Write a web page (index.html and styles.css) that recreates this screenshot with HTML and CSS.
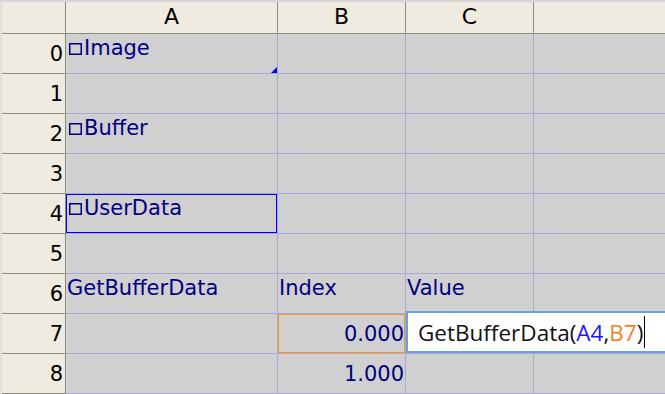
FILE: index.html
```html
<!DOCTYPE html>
<html lang="en">
<head>
    <meta charset="UTF-8">
    <title>Sheet</title>
    <link rel="stylesheet" href="styles.css">
</head>
<body>
    <div class="sheet">
        <div class="hd corner"></div>
        <div class="hd col">A</div>
        <div class="hd col">B</div>
        <div class="hd col">C</div>
        <div class="hd col"></div>

        <div class="hd row">0</div>
        <div class="cell"><svg class="box" width="13" height="12"><rect x="0.75" y="0.75" width="11.5" height="10.5"/></svg>Image<span class="flag"></span></div>
        <div class="cell"></div>
        <div class="cell"></div>
        <div class="cell"></div>

        <div class="hd row">1</div>
        <div class="cell"></div>
        <div class="cell"></div>
        <div class="cell"></div>
        <div class="cell"></div>

        <div class="hd row">2</div>
        <div class="cell"><svg class="box" width="13" height="12"><rect x="0.75" y="0.75" width="11.5" height="10.5"/></svg>Buffer</div>
        <div class="cell"></div>
        <div class="cell"></div>
        <div class="cell"></div>

        <div class="hd row">3</div>
        <div class="cell"></div>
        <div class="cell"></div>
        <div class="cell"></div>
        <div class="cell"></div>

        <div class="hd row">4</div>
        <div class="cell sel"><svg class="box" width="13" height="12"><rect x="0.75" y="0.75" width="11.5" height="10.5"/></svg>UserData</div>
        <div class="cell"></div>
        <div class="cell"></div>
        <div class="cell"></div>

        <div class="hd row">5</div>
        <div class="cell"></div>
        <div class="cell"></div>
        <div class="cell"></div>
        <div class="cell"></div>

        <div class="hd row">6</div>
        <div class="cell">GetBufferData</div>
        <div class="cell">Index</div>
        <div class="cell">Value</div>
        <div class="cell"></div>

        <div class="hd row">7</div>
        <div class="cell"></div>
        <div class="cell num ref">0.000</div>
        <div class="cell">
            <div class="editor">GetBufferData(<span class="r1">A4</span>,<span class="r2">B7</span>)<span class="caret"></span></div>
        </div>
        <div class="cell"></div>

        <div class="hd row">8</div>
        <div class="cell"></div>
        <div class="cell num">1.000</div>
        <div class="cell"></div>
        <div class="cell"></div>
    </div>
</body>
</html>
```

FILE: styles.css
```css
body {
    margin: 0;
    background: #d6d6d6;
    overflow: hidden;
    font-family: "DejaVu Sans", sans-serif;
}
.sheet {
    display: grid;
    grid-template-columns: 64px 212px 128px 128px 180px;
    grid-template-rows: 32px repeat(9, 40px);
    width: max-content;
    margin-top: 2px;
    padding-left: 2px;
    background: #dde1d8;
}

/* headers */
.hd {
    background: #efebe1;
    border-right: 1px solid #8d8c7c;
    border-bottom: 1px solid #8d8c7c;
    color: #000;
}
.col {
    font-size: 22px;
    line-height: 29px;
    text-align: center;
}
.row {
    font-size: 21px;
    display: flex;
    align-items: center;
    justify-content: flex-end;
    padding-right: 2px;
}

/* cells */
.cell {
    position: relative;
    background: #d0d0d0;
    border-right: 1px solid #a9a9d3;
    border-bottom: 1px solid #a9a9d3;
    color: #000080;
    font-size: 21px;
    padding: 2px 1px 0;
    white-space: nowrap;
}
.num {
    display: flex;
    align-items: center;
    justify-content: flex-end;
    padding: 0 1px;
}
.sel {box-shadow: inset 0 0 0 1px #0000ff;}
.ref {box-shadow: inset 0 0 0 1px #f7941d;}

.box {
    margin: 0 2px 0 2px;
    vertical-align: baseline;
}
.box rect {
    fill: none;
    stroke: #000080;
    stroke-width: 1.5;
}
.flag {
    position: absolute;
    right: 0;
    bottom: 0;
    width: 0;
    height: 0;
    border-left: 6px solid transparent;
    border-bottom: 6px solid #0000ff;
}

/* in-cell editor */
.editor {
    position: absolute;
    left: 0;
    top: -3px;
    z-index: 1;
    box-sizing: border-box;
    width: 300px;
    height: 42px;
    display: flex;
    align-items: center;
    padding-left: 10px;
    background: #fff;
    border: 2px solid #64a2e4;
    font-family: "Open Sans", sans-serif;
    font-size: 22.5px;
    color: #111;
}
.r1 {color: #1a1aff;}
.r2 {color: #f58220;}
.caret {
    display: inline-block;
    width: 1px;
    height: 32px;
    margin-left: 1px;
    background: #000;
}
```
